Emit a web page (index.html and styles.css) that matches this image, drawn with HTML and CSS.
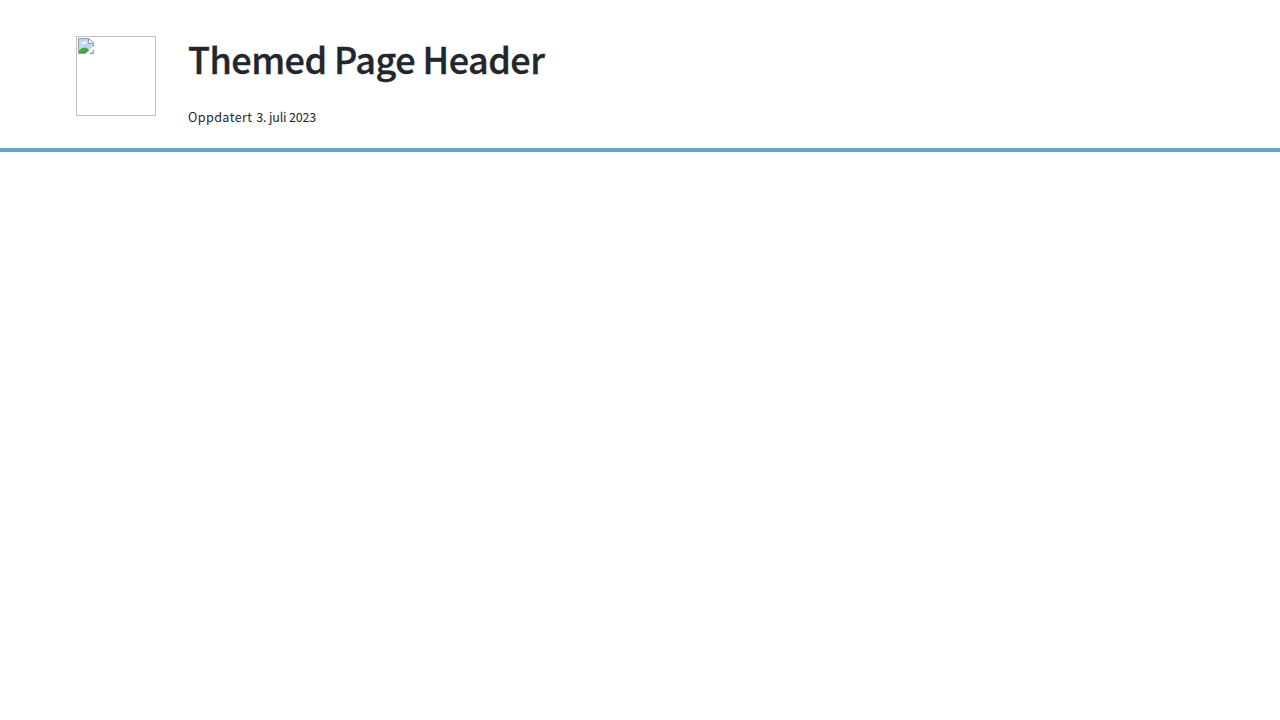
FILE: index.html
```html
<!DOCTYPE html>
<html lang="no">
<head>
<meta charset="utf-8">
<title>Themed Page Header</title>
<link rel="stylesheet" href="styles.css">
</head>
<body>
<header class="page-header">
  <div class="illustration">
    <svg class="missing" width="16" height="16" viewBox="0 0 16 16" aria-hidden="true">
      <path d="M0.5 0.5H11L15.5 5V15.5H0.5Z" fill="#c2d5fa" stroke="#9a9a9a"/>
      <path d="M3 6Q3 4.7 4.5 4.7Q5 3 6.5 3.5Q8 4 7.8 5Q8.5 5.3 8.3 6Z" fill="#fff"/>
      <path d="M1 15V12.5Q4 9 7.5 9.5Q10.5 10 12 15Z" fill="#43ac3a"/>
      <path d="M10.5 0.5V5.5H15.5V5L11 0.5Z" fill="#fff" stroke="#9a9a9a"/>
      <path d="M7 16L16 8V11L11 16Z" fill="#fff"/>
    </svg>
  </div>
  <div class="content">
    <h1 class="title">Themed Page Header</h1>
    <p class="tagline"><span class="label">Oppdatert</span> <span class="date">3. juli 2023</span></p>
  </div>
</header>
</body>
</html>
```

FILE: styles.css
```css
body {
  margin: 0;
  background: #fff;
  font-family: "Noto Sans CJK SC", sans-serif;
}
.page-header {
  display: flex;
  gap: 32px;
  box-sizing: border-box;
  height: 152px;
  padding: 36px 76px 0;
  border-bottom: 4px solid #66a3c4;
}
.illustration {
  box-sizing: border-box;
  width: 80px;
  height: 80px;
  padding: 1px;
  border: 1px solid #c0c0c0;
}
.missing {
  display: block;
}
.title {
  margin: 0;
  color: #23262a;
  font-size: 36px;
  font-weight: 500;
  line-height: 44px;
  letter-spacing: -0.53px;
  -webkit-text-stroke: 0.35px #23262a;
}
.tagline {
  margin: 27px 0 0;
  color: #23262a;
  font-size: 12.6px;
  line-height: 20px;
}
.label {
  margin-right: 1px;
  letter-spacing: 0.4px;
}
.date {
  letter-spacing: -0.2px;
}
```
